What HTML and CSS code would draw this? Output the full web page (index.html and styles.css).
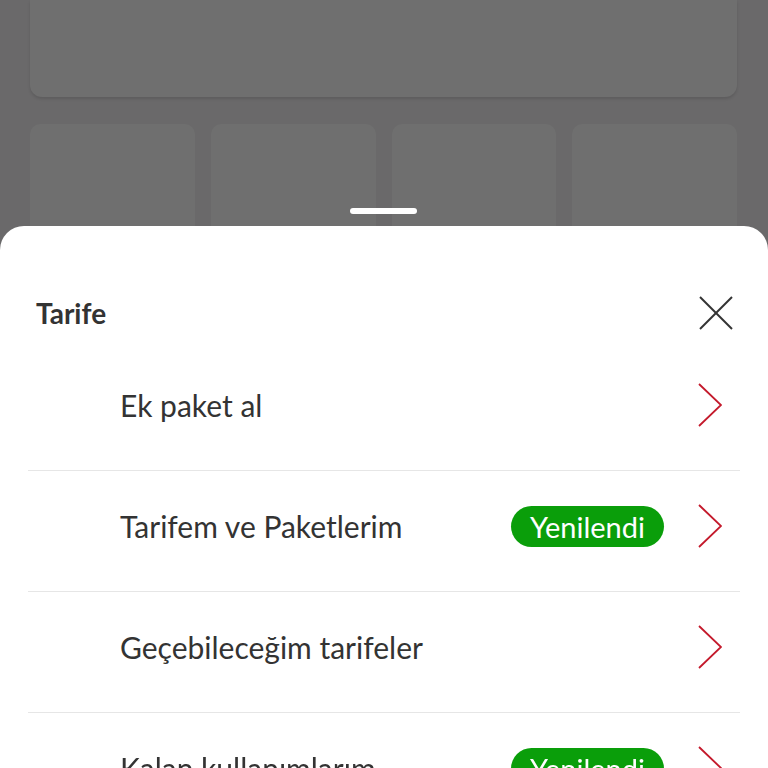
FILE: index.html
```html
<!DOCTYPE html>
<html lang="tr">
<head>
    <meta charset="UTF-8">
    <meta name="viewport" content="width=device-width, initial-scale=1.0">
    <title>Tarife</title>
    <link rel="stylesheet" href="styles.css">
</head>
<body>
    <div class="backdrop">
        <div class="hero-card"></div>
        <div class="tile-row">
            <div class="tile"></div>
            <div class="tile"></div>
            <div class="tile"></div>
            <div class="tile"></div>
        </div>
    </div>

    <div class="sheet-handle"></div>

    <div class="sheet">
        <div class="sheet-header">
            <h2 class="sheet-title">Tarife</h2>
            <svg class="close-icon" width="34" height="34" viewBox="0 0 34 34">
                <line x1="1" y1="1" x2="33" y2="33" />
                <line x1="33" y1="1" x2="1" y2="33" />
            </svg>
        </div>
        <ul class="menu">
            <li class="menu-item">
                <span class="menu-label">Ek paket al</span>
                <svg class="chevron" width="24" height="44" viewBox="0 0 24 44"><polyline points="1,1 23,22 1,43" /></svg>
            </li>
            <li class="menu-item">
                <span class="menu-label">Tarifem ve Paketlerim</span>
                <span class="badge">Yenilendi</span>
                <svg class="chevron" width="24" height="44" viewBox="0 0 24 44"><polyline points="1,1 23,22 1,43" /></svg>
            </li>
            <li class="menu-item">
                <span class="menu-label">Geçebileceğim tarifeler</span>
                <svg class="chevron" width="24" height="44" viewBox="0 0 24 44"><polyline points="1,1 23,22 1,43" /></svg>
            </li>
            <li class="menu-item">
                <span class="menu-label">Kalan kullanımlarım</span>
                <span class="badge">Yenilendi</span>
                <svg class="chevron" width="24" height="44" viewBox="0 0 24 44"><polyline points="1,1 23,22 1,43" /></svg>
            </li>
        </ul>
    </div>
</body>
</html>
```

FILE: styles.css
```css
* {
    margin: 0;
    padding: 0;
    box-sizing: border-box;
}

html, body {
    height: 100%;
    overflow: hidden;
}

body {
    background-color: #6a696a;
    font-family: Lato, "Noto Sans", sans-serif;
    color: #333333;
}

.backdrop {
    padding: 0 31px 0 30px;
}

.hero-card {
    height: 97px;
    background-color: #6f6f6f;
    border-radius: 0 0 12px 12px;
    box-shadow: 0 2px 3px rgba(0, 0, 0, 0.12);
}

.tile-row {
    display: grid;
    grid-template-columns: repeat(4, 1fr);
    gap: 16px;
    margin-top: 27px;
}

.tile {
    height: 200px;
    background-color: #6f6f6f;
    border-radius: 10px;
}

.sheet-handle {
    position: fixed;
    top: 208px;
    left: 350px;
    width: 67px;
    height: 6px;
    border-radius: 3px;
    background-color: #ffffff;
}

.sheet {
    position: fixed;
    top: 226px;
    left: 0;
    right: 0;
    bottom: 0;
    background-color: #ffffff;
    border-radius: 24px 24px 0 0;
}

.sheet-header {
    display: flex;
    justify-content: space-between;
    align-items: center;
    padding: 70px 35px 20px 36px;
    height: 124px;
}

.sheet-title {
    font-size: 28px;
    font-weight: bold;
    line-height: 34px;
    color: #333333;
}

.close-icon line {
    stroke: #333333;
    stroke-width: 2;
}

.menu {
    list-style: none;
    margin: 0 28px;
}

.menu-item {
    display: flex;
    align-items: center;
    height: 121px;
    padding: 0 18px 10px 92px;
    border-bottom: 1px solid #e6e6e6;
}

.menu-label {
    flex: 1;
    font-size: 30px;
    color: #333333;
}

.badge {
    background-color: #0a9e0a;
    color: #ffffff;
    font-size: 29px;
    line-height: 41px;
    padding: 0 19px;
    border-radius: 21px;
    margin-right: 34px;
}

.chevron polyline {
    fill: none;
    stroke: #c41a2c;
    stroke-width: 1.8;
}
```
